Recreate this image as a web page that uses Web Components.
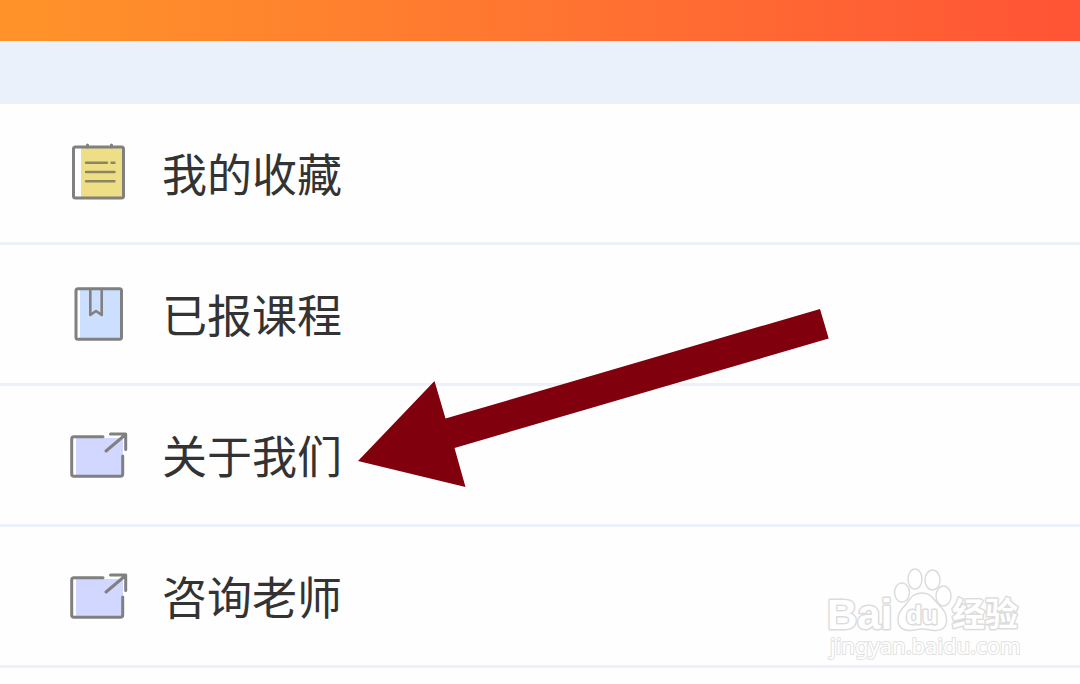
<!DOCTYPE html>
<html lang="zh-CN">
<head>
<meta charset="utf-8">
<meta name="viewport" content="width=device-width, initial-scale=1">
<title>我的</title>
<style>
  body { margin: 0; background: #fefefe; color: #333; font-family: "Noto Sans CJK SC", sans-serif; }
</style>
</head>
<body>
<profile-page>
  <menu-item icon="notes" href="#favorites">我的收藏</menu-item>
  <menu-item icon="book" href="#courses">已报课程</menu-item>
  <menu-item icon="share" href="#about">关于我们</menu-item>
  <menu-item icon="share" href="#teacher">咨询老师</menu-item>
  <pointer-arrow slot="overlay"></pointer-arrow>
  <site-watermark slot="overlay"></site-watermark>
</profile-page>
<script>
const ICONS = {
  notes: `<rect x="7" y="6" width="49.500" height="51" rx="2" fill="#fff" stroke="none"/>
    <path d="M14 6H56V57H14Z" fill="#eedf86" stroke="none"/>
    <rect x="6.500" y="6" width="50" height="51" rx="2"/>
    <path d="M20.500 4V6M44.500 4V6"/>
    <path d="M19 21.700H40M44.500 21.700H47.500M19 31H47.500M19 40.300H47.500" stroke="#8b8563" stroke-width="2.400"/>`,
  book: `<path d="M13 7H54V57H13Z" fill="#cddffe" stroke="none"/>
    <rect x="9" y="6.700" width="45.500" height="50.500" rx="2"/>
    <path d="M23.300 7V33L29 29L34.700 33V7" stroke-width="2.600"/>`,
  share: `<path d="M9 15H56V53H9Z" fill="#d1d7fe" stroke="none"/>
    <path d="M36 13.700H7Q4.700 13.700 4.700 16V51Q4.700 53.300 7 53.300H53.500Q55.700 53.300 55.700 51V33"/>
    <path d="M43.500 11H58.700V26.500M58 12L39 28"/>`
};

customElements.define('profile-page', class extends HTMLElement {
  constructor() {
    super();
    this.attachShadow({ mode: 'open' }).innerHTML = `
      <style>
        :host { display: block; position: relative; min-height: 100vh; overflow: hidden; }
        header { height: 41px; background: linear-gradient(90deg, #ff9429, #ff7531 50%, #ff5436); }
        .gap { height: 63px; background: #eaf1fb; }
        nav { display: flex; flex-direction: column; }
      </style>
      <header></header>
      <div class="gap"></div>
      <nav><slot></slot></nav>
      <slot name="overlay"></slot>`;
  }
});

customElements.define('menu-item', class extends HTMLElement {
  constructor() {
    super();
    this.attachShadow({ mode: 'open' }).innerHTML = `
      <style>
        :host { display: block; border-bottom: 3px solid #edf2fa; }
        a { display: flex; align-items: center; gap: 31px; padding: 36px 67px; color: inherit; text-decoration: none; }
        svg { width: 64px; height: 64px; flex: none; fill: none; stroke: #808080; stroke-width: 3; stroke-linecap: round; stroke-linejoin: round; }
        span { font-size: 45px; line-height: 66px; }
      </style>
      <a><svg viewBox="0 0 64 64" aria-hidden="true"></svg><span><slot></slot></span></a>`;
  }
  connectedCallback() {
    this.shadowRoot.querySelector('a').setAttribute('href', this.getAttribute('href'));
    this.shadowRoot.querySelector('svg').innerHTML = ICONS[this.getAttribute('icon')];
  }
});

customElements.define('pointer-arrow', class extends HTMLElement {
  constructor() {
    super();
    this.attachShadow({ mode: 'open' }).innerHTML = `
      <style>
        :host { display: block; position: absolute; left: 358px; top: 308px; pointer-events: none; }
        svg { display: block; }
      </style>
      <svg width="472" height="180" viewBox="0 0 472 180" aria-hidden="true">
        <path d="M0 153L76.500 73L87.500 110.500L462 1L470.700 30.500L96.500 140L107.500 179Z" fill="#80000d"/>
      </svg>`;
  }
});

customElements.define('site-watermark', class extends HTMLElement {
  constructor() {
    super();
    this.attachShadow({ mode: 'open' }).innerHTML = `
      <style>
        :host { display: block; position: absolute; right: 50px; bottom: 20px; pointer-events: none; }
        svg { display: block; fill: #fff; stroke: #dcdcdc; stroke-width: 1.500; }
        text { font-family: "Liberation Sans", "Noto Sans CJK SC", sans-serif; paint-order: stroke; stroke-width: 2; stroke-linejoin: round; }
        .bold { font-weight: 700; stroke-width: 3; }
        .url { font-family: "Noto Sans", sans-serif; stroke: #e2e2e2; }
      </style>
      <svg width="204" height="100" viewBox="0 0 204 100">
        <text class="bold" x="1" y="65" font-size="42">Bai</text>
        <ellipse cx="89" cy="15" rx="7" ry="10"/>
        <ellipse cx="106.500" cy="16" rx="7.500" ry="10"/>
        <ellipse cx="76" cy="28.500" rx="7.500" ry="9.500"/>
        <ellipse cx="117.500" cy="32" rx="7.500" ry="10"/>
        <path d="M96 29C105 29 107 35 113 41C118 46 121 50 120.500 57C120 65 114 67 108 66.500C103 66 101 65 96 65C91 65 88 67 83 66.500C76 66 71.500 62 72 54C72.500 47 77 44 81 39C85 33 88 29 96 29Z"/>
        <text class="bold" x="80" y="60" font-size="26">du</text>
        <text class="bold" x="126" y="62" font-size="33">经验</text>
        <text class="url" x="4" y="90" font-size="22">jingyan.baidu.com</text>
      </svg>`;
  }
});
</script>
</body>
</html>
